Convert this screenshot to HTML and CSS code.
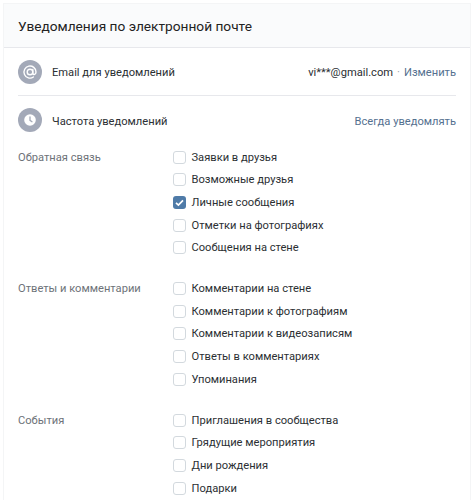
FILE: index.html
```html
<!DOCTYPE html>
<html lang="ru">
<head>
<meta charset="utf-8">
<title>Уведомления</title>
<link rel="stylesheet" href="styles.css">
</head>
<body>
<main class="card">
  <header class="head">Уведомления по электронной почте</header>
  <div class="body">
    <div class="row row-first">
      <span class="avatar"><svg viewBox="0 0 24 24" width="24" height="24"><circle cx="12" cy="12" r="2.8" fill="none" stroke="#fff" stroke-width="1.4"/><path d="M14.8 9.5v3.4c0 2.2 3.2 2.2 3.2-.9a6 6 0 1 0-2.6 5" fill="none" stroke="#fff" stroke-width="1.4" stroke-linecap="round"/></svg></span>
      <span class="row-label">Email для уведомлений</span>
      <span class="row-value">vi***@gmail.com<span class="dot">·</span><a class="link">Изменить</a></span>
    </div>
    <div class="row">
      <span class="avatar"><svg viewBox="0 0 24 24" width="24" height="24"><circle cx="12" cy="12" r="5.8" fill="#fff"/><path d="M12 9v3.3l2 1.4" fill="none" stroke="#a3a9b8" stroke-width="1.3" stroke-linecap="round"/></svg></span>
      <span class="row-label">Частота уведомлений</span>
      <a class="link row-value">Всегда уведомлять</a>
    </div>
    <div class="groups">
      <section class="group">
        <h3 class="group-title">Обратная связь</h3>
        <ul class="checks">
          <li class="check"><span class="box"></span>Заявки в друзья</li>
          <li class="check"><span class="box"></span>Возможные друзья</li>
          <li class="check"><span class="box box-on"><svg viewBox="0 0 13 13" width="13" height="13"><path d="M3 6.8l2.4 2.3L10 4.4" fill="none" stroke="#fff" stroke-width="1.7"/></svg></span>Личные сообщения</li>
          <li class="check"><span class="box"></span>Отметки на фотографиях</li>
          <li class="check"><span class="box"></span>Сообщения на стене</li>
        </ul>
      </section>
      <section class="group">
        <h3 class="group-title">Ответы и комментарии</h3>
        <ul class="checks">
          <li class="check"><span class="box"></span>Комментарии на стене</li>
          <li class="check"><span class="box"></span>Комментарии к фотографиям</li>
          <li class="check"><span class="box"></span>Комментарии к видеозаписям</li>
          <li class="check"><span class="box"></span>Ответы в комментариях</li>
          <li class="check"><span class="box"></span>Упоминания</li>
        </ul>
      </section>
      <section class="group">
        <h3 class="group-title">События</h3>
        <ul class="checks">
          <li class="check"><span class="box"></span>Приглашения в сообщества</li>
          <li class="check"><span class="box"></span>Грядущие мероприятия</li>
          <li class="check"><span class="box"></span>Дни рождения</li>
          <li class="check"><span class="box"></span>Подарки</li>
        </ul>
      </section>
    </div>
  </div>
</main>
</body>
</html>
```
FILE: styles.css
```css
* { box-sizing: border-box; }
html, body { margin: 0; height: 500px; overflow: hidden; background: #fff; }
body { padding: 3px 3px 0; font-family: Roboto, "Liberation Sans", sans-serif; font-size: 11.15px; color: #2b2f33; }
.card { border: 1px solid #f4f5f6; border-bottom: 0; height: 497px; overflow: hidden; }
.head { height: 44px; display: flex; align-items: center; padding-left: 14px; background: #fafbfc; border-bottom: 1px solid #e7e8ec; font-size: 13.7px; color: #222; }
.body { padding: 0 14px; }
.row { height: 48px; display: flex; align-items: center; gap: 10px; }
.row-first { border-bottom: 1px solid #e7e8ec; }
.avatar { width: 24px; height: 24px; border-radius: 50%; background: #a3a9b8; display: block; flex: none; }
.avatar svg { display: block; }
.row-label, .row-value { padding-top: 2px; }
.row-value { margin-left: auto; }
.link { color: #54708f; }
.dot { color: #939ba5; margin: 0 4px; }
.groups { padding-top: 2px; }
.group { display: flex; margin-bottom: 18.5px; }
.group-title { width: 155px; margin: 0; padding-top: 1px; font-size: 11.15px; font-weight: 400; color: #6d7278; line-height: 22.6px; }
.checks { list-style: none; margin: 0; padding: 0; }
.check { height: 22.6px; display: flex; align-items: center; gap: 5.5px; }
.box { width: 13px; height: 13px; border: 1px solid #d3d9de; border-radius: 3px; background: #fff; flex: none; }
.box-on { border: 0; background: #4f7ba8; }
.box-on svg { display: block; }
```
